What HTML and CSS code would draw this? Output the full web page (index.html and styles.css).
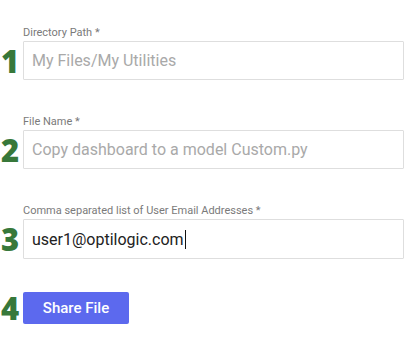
FILE: index.html
```html
<!DOCTYPE html>
<html lang="en">
<head>
    <meta charset="UTF-8">
    <meta name="viewport" content="width=device-width, initial-scale=1.0">
    <title>Share File</title>
    <link rel="stylesheet" href="styles.css">
</head>
<body>
    <form class="share-form">
        <div class="field">
            <label class="field-label" for="dirInput">Directory Path *</label>
            <span class="step">1</span>
            <input type="text" id="dirInput" class="field-input" placeholder="My Files/My Utilities">
        </div>
        <div class="field">
            <label class="field-label" for="nameInput">File Name *</label>
            <span class="step">2</span>
            <input type="text" id="nameInput" class="field-input" placeholder="Copy dashboard to a model Custom.py">
        </div>
        <div class="field">
            <label class="field-label" for="emailInput">Comma separated list of User Email Addresses *</label>
            <span class="step">3</span>
            <div class="field-input filled">user1@optilogic.com<span class="caret"></span></div>
        </div>
        <div class="field action">
            <span class="step">4</span>
            <button type="button" class="share-button">Share File</button>
        </div>
    </form>
</body>
</html>
```

FILE: styles.css
```css
body {
    margin: 0;
    padding: 0;
    background: #fff;
    font-family: Roboto, "Liberation Sans", sans-serif;
}

.share-form {
    width: 404px;
    padding-top: 26px;
}

.field {
    display: grid;
    grid-template-columns: 23px 1fr;
    align-items: center;
    margin-bottom: 35px;
}

.field-label {
    grid-column: 2;
    font-size: 11px;
    line-height: 14px;
    color: #7a7a7a;
    margin-bottom: 1px;
}

.step {
    grid-column: 1;
    font-family: "Open Sans", sans-serif;
    font-weight: 800;
    font-size: 31px;
    line-height: 36px;
    color: #37783a;
    padding-left: 1px;
}

.field-input {
    grid-column: 2;
    box-sizing: border-box;
    height: 39px;
    width: 100%;
    border: 1px solid #dedede;
    border-radius: 1px;
    padding: 0 8px;
    font-family: Roboto, sans-serif;
    font-size: 16px;
    color: #222;
    outline: none;
    background: #fff;
}

.field-input::placeholder {
    color: #a9a9a9;
}

.filled {
    display: flex;
    align-items: center;
    height: 40px;
}

.caret {
    display: inline-block;
    width: 1px;
    height: 19px;
    background: #111;
    margin-left: 1px;
}

.action {
    margin-top: -4px;
    margin-bottom: 0;
}

.share-button {
    grid-column: 2;
    justify-self: start;
    width: 106px;
    height: 32px;
    border: none;
    border-radius: 2px;
    background: #5c69ee;
    color: #fff;
    font-family: Roboto, sans-serif;
    font-weight: 500;
    font-size: 15px;
    cursor: pointer;
}
```
